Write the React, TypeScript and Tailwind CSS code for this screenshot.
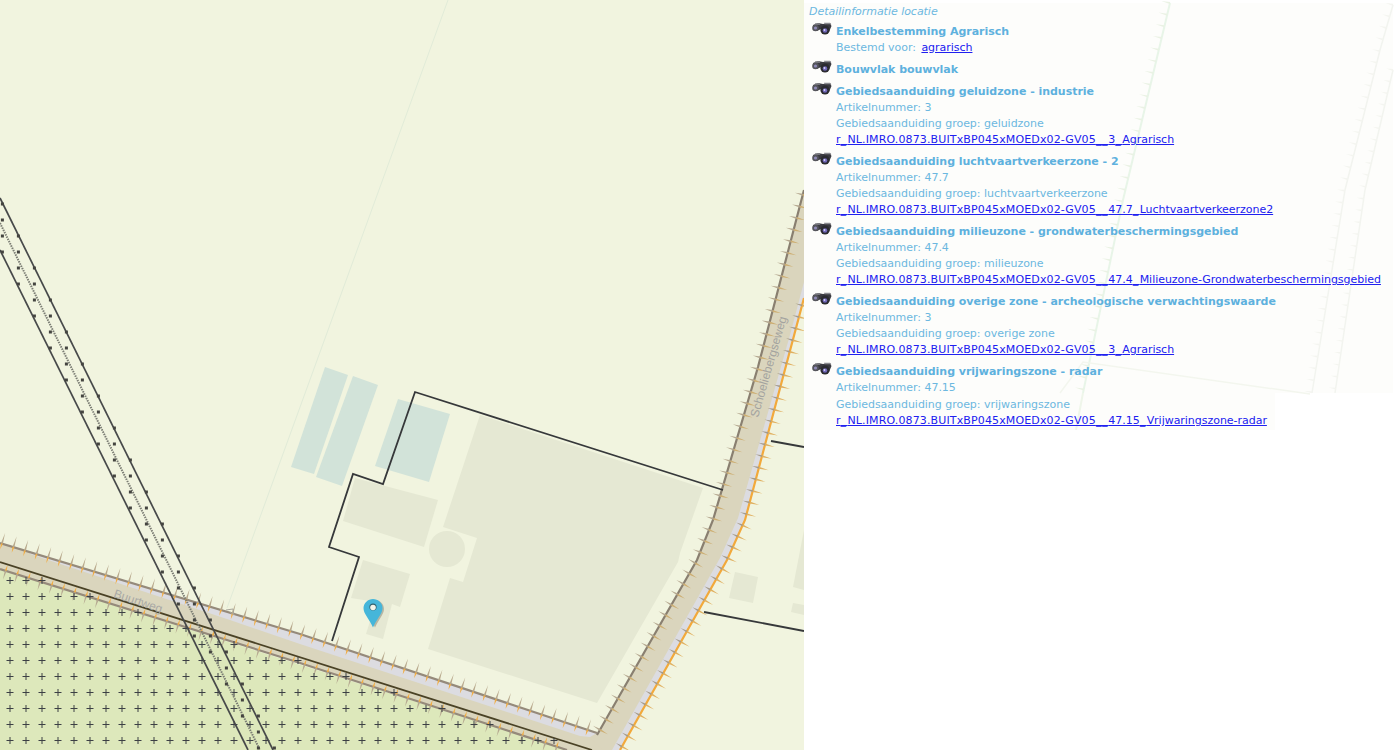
import React from "react";

type P = [number, number];
const pts = (a: P[]) => a.map((p) => p.join(",")).join(" ");

function walk(line: P[], step: number, start = 0) {
  const out: { x: number; y: number; ux: number; uy: number }[] = [];
  let next = start;
  let acc = 0;
  for (let i = 0; i < line.length - 1; i++) {
    const [x1, y1] = line[i];
    const [x2, y2] = line[i + 1];
    const len = Math.hypot(x2 - x1, y2 - y1);
    const ux = (x2 - x1) / len;
    const uy = (y2 - y1) / len;
    while (next <= acc + len) {
      const t = next - acc;
      out.push({ x: x1 + ux * t, y: y1 + uy * t, ux, uy });
      next += step;
    }
    acc += len;
  }
  return out;
}

function Ticks({ line, step, start, up, down, upColor, downColor, flip, hw = 1 }: { line: P[]; step: number; start?: number; up: number; down: number; upColor: string; downColor: string; flip?: boolean; hw?: number }) {
  const ws = walk(line, step, start);
  return (
    <g>
      {ws.map((w, i) => {
        let nx = w.uy;
        let ny = -w.ux;
        if (flip) {
          nx = -nx;
          ny = -ny;
        }
        return (
          <g key={i}>
            <polygon points={pts([[w.x - w.ux * hw, w.y - w.uy * hw], [w.x + w.ux * hw, w.y + w.uy * hw], [w.x + nx * up, w.y + ny * up]])} fill={upColor} />
            <polygon points={pts([[w.x - w.ux * hw, w.y - w.uy * hw], [w.x + w.ux * hw, w.y + w.uy * hw], [w.x - nx * down, w.y - ny * down]])} fill={downColor} />
          </g>
        );
      })}
    </g>
  );
}

const r1Up: P[] = [[0, 543], [300, 634], [597, 733]];
const r1Low: P[] = [[0, 569], [300, 663], [567, 750]];
const r2Left: P[] = [[597, 735], [697, 560], [713, 520], [758, 367], [778, 290], [804, 190]];
const r2Or: P[] = [[620, 750], [727, 560], [745, 520], [804, 298]];

const lineAX = (y: number) => (y - 198) / 1.97;
const lineBX = (y: number) => (y - 250) / 1.97;

function MapSvg() {
  const plus: React.ReactNode[] = [];
  for (let x = 10; x < 804; x += 16) {
    for (let y = 580; y < 750; y += 16) {
      if (y >= 569 + 0.3133 * x - 3) {
        plus.push(<path key={`${x}-${y}`} d={`M${x - 3.5} ${y + 0.5}H${x + 3.5}M${x} ${y - 3}V${y + 4}`} stroke="#3c4045" strokeWidth="1" fill="none" />);
      }
    }
  }
  const squares: React.ReactNode[] = [];
  for (let x = 2.4; x < 300; x += 16) {
    for (let y = 204; y < 750; y += 16) {
      if (x <= lineAX(y) + 1.6 && x >= lineBX(y) - 1.6) {
        squares.push(<rect key={`${x}-${y}`} x={x - 1.5} y={y - 1.5} width="3" height="3" fill="#444440" />);
      }
    }
  }
  return (
    <svg width="804" height="750" viewBox="0 0 804 750" className="block">
      <defs>
        <clipPath id="below">
          <polygon points="0,562 592,750 0,750" />
        </clipPath>
      </defs>
      <rect width="804" height="750" fill="#f1f4df" />
      <line x1="448" y1="0" x2="227" y2="608" stroke="#e1ebd8" strokeWidth="1" />
      <polygon points={pts([[0, 569], [567, 750], [0, 750]])} fill="#dde8bb" />

      <polygon points={pts([[325, 367], [348, 375], [314, 474], [291, 467]])} fill="#d2e3d9" />
      <polygon points={pts([[353, 376], [378, 385], [342, 486], [316, 477]])} fill="#d2e3d9" />
      <polygon points={pts([[398, 399], [450, 414], [429, 482], [375, 466]])} fill="#d2e3d9" />
      <polygon points={pts([[355, 478], [438, 500], [424, 547], [343, 521]])} fill="#e5e8d3" />
      <circle cx="447" cy="549" r="18" fill="#e5e8d3" />
      <polygon points={pts([[363, 560], [410, 574], [400, 607], [392, 604], [383, 639], [366, 634], [376, 602], [351, 598]])} fill="#e5e8d3" />
      <polygon points={pts([[480, 415], [703, 488], [680, 553], [678, 562], [597, 703], [428, 649], [450, 578], [463, 582], [477, 538], [443, 527]])} fill="#e5e8d3" />
      <polygon points={pts([[735, 572], [758, 577], [753, 603], [729, 598]])} fill="#e5e8d3" />
      <polygon points={pts([[804, 530], [793, 587], [804, 590]])} fill="#e5e8d3" />
      <polygon points={pts([[793, 603], [804, 605], [804, 615], [791, 612]])} fill="#e5e8d3" />

      {/* roads */}
      <polygon points={pts([[0, 543], [300, 634], [597, 733], [620, 750], [567, 750], [300, 663], [0, 569]])} fill="#dad5bd" />
      <polygon points={pts([...r2Left, [804, 298], [745, 520], [727, 560], [620, 750], [603, 750], [590, 738]])} fill="#dad5bd" />
      <polygon points={pts([[30, 552], [230, 612], [300, 634], [597, 733], [590, 737], [580, 736], [300, 644], [230, 620], [30, 554]])} fill="#dcdce1" />
      <polygon points={pts([[620, 750], [727, 560], [745, 520], [804, 298], [804, 282], [790, 335], [738, 518], [720, 558], [612, 750]])} fill="#dcdce1" />

      <polyline points={pts(r1Up)} fill="none" stroke="#958a7b" strokeWidth="2.2" />
      <polyline points={pts(r1Low)} fill="none" stroke="#958a7b" strokeWidth="2.2" />
      <polyline points={pts(r2Left)} fill="none" stroke="#897f70" strokeWidth="2.2" />
      <polyline points={pts(r2Or)} fill="none" stroke="#f2a93b" strokeWidth="2.2" />

      <Ticks line={r1Up} step={12.05} start={2} up={11} down={6} upColor="#b8a98d" downColor="#f0ac44" />
      <Ticks line={r1Low} step={12.05} start={6} up={6} down={9} upColor="#f0ac44" downColor="#b5a890" />
      <Ticks line={r2Left} step={12} start={6} up={9} down={8} upColor="#cdae72" downColor="#b5a890" flip />
      <Ticks line={r2Or} step={12} start={4} up={10} down={7} upColor="#e0b060" downColor="#a59b8a" flip />

      <line x1="0" y1="562" x2="592" y2="750" stroke="#4a4226" strokeWidth="1.8" />

      {/* hatch */}
      <g clipPath="url(#below)">{plus}</g>

      {/* parcels */}
      <polyline points="723,490 415,392 383,484 353,474 329,547 359,557 332,641" fill="none" stroke="#36383a" strokeWidth="1.8" />
      <line x1="704" y1="612" x2="804" y2="631" stroke="#36383a" strokeWidth="1.8" />
      <line x1="771" y1="441" x2="804" y2="447" stroke="#36383a" strokeWidth="1.8" />

      {/* pipeline */}
      <line x1="0" y1="198" x2="273" y2="750" stroke="#47494a" strokeWidth="1.7" />
      <line x1="0" y1="250" x2="248" y2="750" stroke="#47494a" strokeWidth="1.7" />
      <line x1="0" y1="223" x2="260" y2="750" stroke="#7b7d74" strokeWidth="2" strokeDasharray="1.5 1" />
      {squares}

      {/* bend marker near the junction */}
      <path d="M226 610l7-1 1 6-4-3" fill="none" stroke="#a9a79c" strokeWidth="1" />

      {/* labels */}
      <text x="113" y="597" transform="rotate(18.5 113 597)" fontFamily="'Liberation Sans', Arial, sans-serif" fontSize="12" fill="#a9a9a5">Buurtweg</text>
      <text x="758" y="418" transform="rotate(-74 758 418)" fontFamily="'Liberation Sans', Arial, sans-serif" fontSize="12" fill="#a3a39f">Schoeliebergseweg</text>

      {/* pin */}
      <path d="M375 600c5 0 9 4 9 9 0 5-5 10-9 18.500-4-8.500-9-13.500-9-18.500 0-5 4-9 9-9z" fill="#6e6b5c" opacity="0.4" />
      <path d="M373 599c5 0 9.500 4 9.500 9 0 6-6 11-9.500 19.500-3.500-8.500-9.500-13.500-9.500-19.500 0-5 4.500-9 9.500-9z" fill="#45b6da" />
      <circle cx="373" cy="607" r="3.600" fill="#2f5f6d" />
      <circle cx="373" cy="607.500" r="2.800" fill="#f1f4ea" />
    </svg>
  );
}

function FaintSvg() {
  const g1: P[] = [[1170, 3], [1123, 200], [1083, 393]];
  const g2: P[] = [[1393, 5], [1380, 50], [1345, 190], [1312, 393]];
  const g3: P[] = [[1393, 70], [1365, 190], [1335, 393]];
  return (
    <svg width="591" height="430" viewBox="804 0 591 430" className="absolute left-0 top-0">
      <polygon points="804,3 1393,3 1393,393 1275,393 1275,430 804,430" fill="#fdfdfb" />
      <polyline points={pts(g1)} fill="none" stroke="#e8f5e8" strokeWidth="2" />
      <Ticks line={g1} step={12} up={0} down={9} upColor="#f1f6ee" downColor="#eaf2e4" />
      <line x1="1083" y1="393" x2="1076" y2="430" stroke="#eff6ea" strokeWidth="2" />
      <polyline points="1060,393 1083,362 1310,394" fill="none" stroke="#f3f6ee" strokeWidth="1.500" />
      <polyline points={pts(g2)} fill="none" stroke="#f2f4ef" strokeWidth="1.500" />
      <Ticks line={g2} step={12} up={0} down={8} upColor="#f4f5f0" downColor="#f4f5f0" />
      <polyline points={pts(g3)} fill="none" stroke="#f2f4ef" strokeWidth="1.500" />
      <Ticks line={g3} step={12} up={0} down={7} upColor="#f4f5f0" downColor="#f4f5f0" />
    </svg>
  );
}

function Binoculars() {
  return (
    <svg width="21" height="14" viewBox="0 0 21 14" className="shrink-0">
      <path d="M2 3 L7 1 L12 2 L19 1 L20.500 4 L18 10 L14 12 L10 7 L6 9 L2 8z" fill="#3a3a40" />
      <path d="M4 1.200h4l1.500 1.500H4zM13 0.700h6l1.500 1.500h-7z" fill="#8a8a90" />
      <circle cx="4.500" cy="6" r="3.300" fill="#55555c" />
      <circle cx="4.500" cy="6" r="1.600" fill="#8f8ab8" />
      <circle cx="14" cy="8" r="4.600" fill="#2b2b30" />
      <circle cx="14" cy="8.500" r="2.300" fill="#6f66b8" />
      <circle cx="13.500" cy="8" r="0.900" fill="#d8d4f2" />
    </svg>
  );
}

function LinkText({ text }: { text: string }) {
  const m = text.match(/^r_(NL\..*GV05)__(.*)$/);
  if (!m) return <>{text}</>;
  const tail = m[2].split("_");
  return (
    <>
      r<span className="tracking-[1.5px]">_</span>
      <span className="tracking-[0.13px]">{m[1]}</span>
      <span className="tracking-[0.7px]">__</span>
      {tail.map((p, i) => (
        <React.Fragment key={i}>
          {p}
          {i < tail.length - 1 && <span className="tracking-[1.5px]">_</span>}
        </React.Fragment>
      ))}
    </>
  );
}

type Sec = { title: string; lines?: string[]; link?: string; linkPrefix?: string };
const base = "r_NL.IMRO.0873.BUITxBP045xMOEDx02-GV05__";
const sections: Sec[] = [
  { title: "Enkelbestemming Agrarisch", linkPrefix: "Bestemd voor: ", link: "agrarisch" },
  { title: "Bouwvlak bouwvlak" },
  { title: "Gebiedsaanduiding geluidzone - industrie", lines: ["Artikelnummer: 3", "Gebiedsaanduiding groep: geluidzone"], link: base + "3_Agrarisch" },
  { title: "Gebiedsaanduiding luchtvaartverkeerzone - 2", lines: ["Artikelnummer: 47.7", "Gebiedsaanduiding groep: luchtvaartverkeerzone"], link: base + "47.7_Luchtvaartverkeerzone2" },
  { title: "Gebiedsaanduiding milieuzone - grondwaterbeschermingsgebied", lines: ["Artikelnummer: 47.4", "Gebiedsaanduiding groep: milieuzone"], link: base + "47.4_Milieuzone-Grondwaterbeschermingsgebied" },
  { title: "Gebiedsaanduiding overige zone - archeologische verwachtingswaarde", lines: ["Artikelnummer: 3", "Gebiedsaanduiding groep: overige zone"], link: base + "3_Agrarisch" },
  { title: "Gebiedsaanduiding vrijwaringszone - radar", lines: ["Artikelnummer: 47.15", "Gebiedsaanduiding groep: vrijwaringszone"], link: base + "47.15_Vrijwaringszone-radar" },
];

export default function App() {
  return (
    <div className="flex w-[1395px] h-[750px] overflow-hidden bg-white font-['DejaVu_Sans',Verdana,sans-serif] text-[11px] leading-4 tracking-[-0.03px] text-[#6cb8e0]">
      <div className="w-[804px] h-[750px] shrink-0">
        <MapSvg />
      </div>
      <div className="relative flex-1 h-[750px]">
        <FaintSvg />
        <div className="relative pl-[7px] pt-1">
          <div className="italic -ml-[2px] mb-1">Detailinformatie locatie</div>
          <div className="flex flex-col gap-1.5">
            {sections.map((s, i) => (
              <div key={i} className="flex gap-1">
                <div className="-mt-[2px]">
                  <Binoculars />
                </div>
                <div>
                  <div className="font-bold text-[#5eb1de]">{s.title}</div>
                  {s.lines?.map((l, j) => (
                    <div key={j} className={i === 6 && j === 1 ? "mt-px" : ""}>{l}</div>
                  ))}
                  {s.link && (
                    <div>
                      {s.linkPrefix}
                      <a href="#" className={s.linkPrefix ? "underline text-[#2020f0] ml-0.5" : "underline text-[#2020f0]"}>
                        <LinkText text={s.link} />
                      </a>
                    </div>
                  )}
                </div>
              </div>
            ))}
          </div>
        </div>
      </div>
    </div>
  );
}
